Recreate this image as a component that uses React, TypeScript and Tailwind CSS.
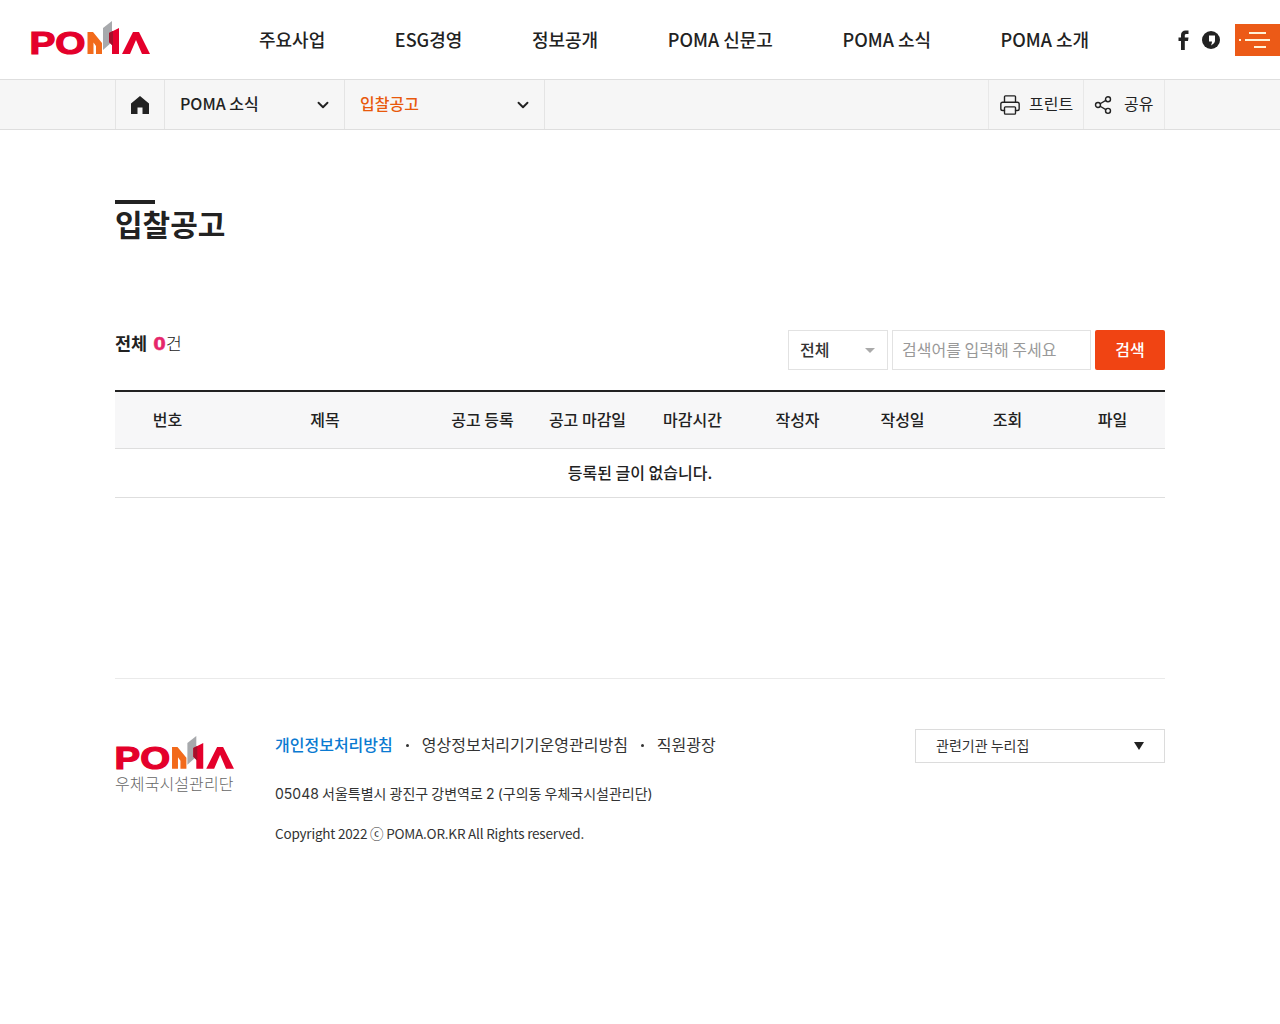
import React from "react";
import { ChevronDown, Printer, Share2 } from "lucide-react";

const font = "font-['Noto_Sans_CJK_KR','Noto_Sans',sans-serif]";

function Logo({ w }: { w: number }) {
  return (
    <svg width={w} height={(w * 34) / 120} viewBox="0 0 120 34" className="block shrink-0 overflow-visible">
      <text x="-0.500" y="33" fontFamily="Liberation Sans" fontWeight="700" fontSize="31" textLength="56" lengthAdjust="spacingAndGlyphs" fill="#e4002b" stroke="#e4002b" strokeWidth="1.200">PO</text>
      <polygon points="57.500,33 57.500,11 63,11 72,22 72,33 66,33 66,25 63.500,21.500 63.500,33" fill="#f26a1b" />
      <polygon points="73,7 82,0 82,21 73,29" fill="#a7a9ac" />
      <polygon points="79,12 89,7 89,33 82,33 82,24 79,21" fill="#e4002b" />
      <polygon points="79,12 83,10 83,25 79,21" fill="#a3112a" />
      <polygon points="92,33 103,11 109,11 120,33 112,33 106,19 100,33" fill="#e4002b" />
    </svg>
  );
}

const cols = ["번호", "제목", "공고 등록", "공고 마감일", "마감시간", "작성자", "작성일", "조회", "파일"];

export default function App() {
  return (
    <div className={`${font} w-[1280px] h-[1024px] bg-white text-[#222] overflow-hidden`}>
      <header className="h-[79px] flex items-center relative">
        <div className="ml-[30px] mt-[-4px]"><Logo w={120} /></div>
        <ul className="ml-[109px] flex gap-[69.600px] mt-[-2px]">
          {["주요사업", "ESG경영", "정보공개", "POMA 신문고", "POMA 소식", "POMA 소개"].map((t) => (
            <li key={t} className="text-[18px] leading-none font-medium whitespace-nowrap">{t}</li>
          ))}
        </ul>
        <div className="ml-auto flex items-center mt-[1px]">
          <svg width="12" height="20" viewBox="0 0 12 20" className="mr-[12px]">
            <path d="M3 20V11H0.500V7.500H3V5C3 2 5 0.500 7.500 0.500H10.500V4H8.500C7.300 4 6.800 4.500 6.800 5.500V7.500H10.500L10 11H6.800V20Z" fill="#222" />
          </svg>
          <svg width="18" height="18" viewBox="0 0 18 18" className="mr-[15px]">
            <circle cx="9" cy="9" r="9" fill="#222" />
            <path d="M7 4.500H13V9.500C13 11.500 11.500 13 9 14.500C9.500 13 10 12 10 10.500H7Z" fill="#fff" />
          </svg>
          <div className="w-[45px] h-[32px] bg-[#ec5a17] relative">
            <span className="absolute left-[14px] top-[8px] w-[17px] h-[2px] bg-[#fff3d9]" />
            <span className="absolute left-[10px] top-[15px] w-[25px] h-[2px] bg-[#fff3d9]" />
            <span className="absolute left-[4px] top-[15px] w-[2px] h-[2px] bg-[#fff3d9]" />
            <span className="absolute left-[19px] top-[22px] w-[12px] h-[2px] bg-[#fff3d9]" />
          </div>
        </div>
      </header>

      <nav className="h-[51px] bg-[#f6f6f6] border-y border-[#dedede] pl-[115px] pr-[115px] flex">
        <div className="w-[50px] border-x border-[#e4e4e4] flex items-center justify-center">
          <svg width="18" height="18" viewBox="0 0 18 18">
            <path d="M9 0L18 7.500V18H11.500V11.500H6.500V18H0V7.500Z" fill="#222" />
          </svg>
        </div>
        <div className="w-[180px] border-r border-[#e4e4e4] flex items-center justify-between pl-[15px] pr-[12px]">
          <span className="text-[16px] font-medium mt-[-4px]">POMA 소식</span>
          <ChevronDown size={18} strokeWidth={2.500} />
        </div>
        <div className="w-[200px] border-r border-[#e4e4e4] flex items-center justify-between pl-[15px] pr-[12px]">
          <span className="text-[16px] font-medium text-[#e8590c] mt-[-4px]">입찰공고</span>
          <ChevronDown size={18} strokeWidth={2.500} />
        </div>
        <div className="ml-auto w-[95px] border-l border-[#e8e8e8] flex items-center pl-[10px] gap-[8px]">
          <Printer size={22} strokeWidth={1.500} />
          <span className="text-[16px] mt-[-4px]">프린트</span>
        </div>
        <div className="w-[82px] border-x border-[#e8e8e8] flex items-center pl-[9px] gap-[11px]">
          <Share2 size={20} strokeWidth={1.700} />
          <span className="text-[16px] mt-[-4px]">공유</span>
        </div>
      </nav>

      <main className="mx-[115px] w-[1050px]">
        <div className="mt-[70px] w-[40px] h-[4px] bg-[#222]" />
        <h1 className="text-[30px] leading-[40px] font-bold mt-[-1px]">입찰공고</h1>

        <div className="mt-[87px] flex h-[40px] items-start justify-between">
          <p className="text-[17.500px] leading-[25px] flex items-baseline whitespace-pre">
            <b className="font-bold">전체 </b>
            <b className="font-bold text-[#e6266b] font-['DejaVu_Sans'] text-[18px] leading-none ml-[2px] [-webkit-text-stroke:0.400px_#e6266b]">0</b>
            <span className="font-light">건</span>
          </p>
          <div className="flex gap-[4px]">
            <div className="w-[100px] h-[40px] border border-[#e2e2e2] flex items-center justify-between pl-[11px] pr-[12px] pb-[2px]">
              <span className="text-[16px] font-medium text-[#333]">전체</span>
              <span className="w-0 h-0 border-x-[5px] border-x-transparent border-t-[5px] border-t-[#aaa] mt-[2px]" />
            </div>
            <div className="w-[199px] h-[40px] border border-[#e2e2e2] flex items-center pl-[9px] pb-[2px] text-[16px] text-[#999]">검색어를 입력해 주세요</div>
            <button className="w-[70px] h-[40px] bg-[#f04413] text-white rounded-[2px] text-[16px] font-medium pb-[2px]">검색</button>
          </div>
        </div>

        <div className="mt-[20px] border-t-2 border-[#222]">
          <div className="h-[57px] bg-[#f7f7f8] border-b border-[#dedede] grid grid-cols-[105px_210px_105px_105px_105px_105px_105px_105px_105px] items-center text-center text-[16px] font-medium pb-[2px]">
            {cols.map((c) => <div key={c}>{c}</div>)}
          </div>
          <div className="h-[49px] border-b border-[#dedede] flex items-center justify-center text-[16px] font-medium pb-[2px]">등록된 글이 없습니다.</div>
        </div>
      </main>

      <footer className="mx-[115px] w-[1050px] mt-[180px] border-t border-[#eaeaea] pt-[50px] flex">
        <div className="w-[160px] shrink-0">
          <div className="mt-[7px]"><Logo w={119} /></div>
          <div className="mt-[3px] text-[16px] leading-[20px] font-light text-[#666] tracking-[0.1px] whitespace-nowrap">우체국시설관리단</div>
        </div>
        <div className="flex-1">
          <div className="flex items-center text-[16px] leading-[32px] text-[#333] mt-[-1px]">
            <span className="font-medium text-[#0b7ad1]">개인정보처리방침</span>
            <span className="w-[3px] h-[3px] rounded-full bg-[#333] ml-[13px] mr-[13px] mt-[3px]" />
            <span>영상정보처리기기운영관리방침</span>
            <span className="w-[3px] h-[3px] rounded-full bg-[#333] ml-[13px] mr-[13px] mt-[3px]" />
            <span>직원광장</span>
          </div>
          <p className="mt-[24px] font-['Inter','Noto_Sans_CJK_KR',sans-serif] text-[14px] [word-spacing:-0.800px] leading-[20px] text-[#333]">05048 서울특별시 광진구 강변역로 2 (구의동 우체국시설관리단)</p>
          <p className="mt-[19px] text-[13.500px] tracking-[-0.200px] leading-[20px] text-[#333]">Copyright 2022 ⓒ POMA.OR.KR All Rights reserved.</p>
        </div>
        <div className="w-[250px] h-[34px] border border-[#dcdcdc] flex items-center justify-between pl-[20px] pr-[20px] pb-[2px] text-[14px] text-[#333]">
          <span>관련기관 누리집</span>
          <span className="w-0 h-0 border-x-[5px] border-x-transparent border-t-[8px] border-t-[#222] mt-[2px]" />
        </div>
      </footer>
    </div>
  );
}
